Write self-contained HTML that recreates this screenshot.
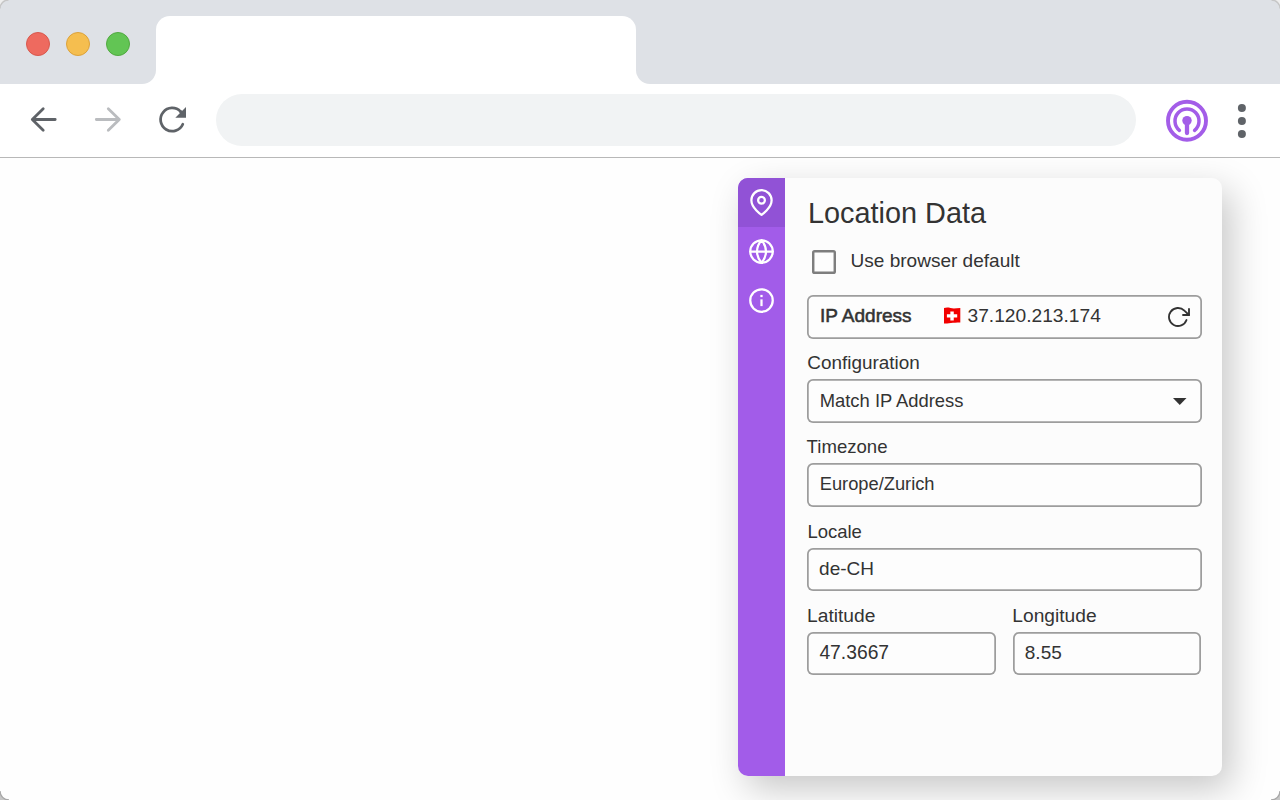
<!DOCTYPE html>
<html>
<head>
<meta charset="utf-8">
<style>
html,body{margin:0;padding:0;width:1280px;height:800px;overflow:hidden;background:#fefefe;font-family:"Liberation Sans",sans-serif;}
.abs{position:absolute;}
#strip{position:absolute;left:0;top:0;width:1280px;height:84px;background:#dee1e6;}
#tab{position:absolute;left:156px;top:16px;width:480px;height:68px;background:#fff;border-radius:14px 14px 0 0;}
.flare{position:absolute;top:70px;width:14px;height:14px;background:#fff;}
.flare i{position:absolute;left:0;top:0;width:14px;height:14px;background:#dee1e6;}
#toolbar{position:absolute;left:0;top:84px;width:1280px;height:73px;background:#fff;}
#line{position:absolute;left:0;top:157px;width:1280px;height:1px;background:#b8b8b8;}
#omni{position:absolute;left:216px;top:94px;width:920px;height:52px;border-radius:26px;background:#f1f3f4;}
.dot{position:absolute;width:24px;height:24px;border-radius:50%;box-sizing:border-box;border:1px solid;}
#panel{position:absolute;left:738px;top:178px;width:484px;height:598px;background:#fcfcfc;border-radius:10px;box-shadow:9px 13px 36px rgba(0,0,0,0.22);overflow:hidden;}
#side{position:absolute;left:0;top:0;width:47.4px;height:598px;background:#a25ce9;}
#active{position:absolute;left:0;top:0;width:47.4px;height:49px;background:#9152d6;}
.t{position:absolute;white-space:nowrap;color:#333;line-height:1;}
.box{position:absolute;box-sizing:border-box;border:none;box-shadow:inset 0 0 0 1.75px #9d9d9d;border-radius:6px;background:#fdfdfd;}
</style>
</head>
<body>
<div id="strip"></div>
<div id="tab"></div>
<div class="flare" style="left:142px"><i style="border-radius:0 0 14px 0"></i></div>
<div class="flare" style="left:636px"><i style="border-radius:0 0 0 14px"></i></div>
<div id="toolbar"></div>
<div id="line"></div>
<div id="omni"></div>

<div class="dot" style="left:26px;top:32px;background:#ee6a5f;border-color:#d8584d"></div>
<div class="dot" style="left:66px;top:32px;background:#f5be4f;border-color:#dca23b"></div>
<div class="dot" style="left:106px;top:32px;background:#62c554;border-color:#51a940"></div>

<!-- window corners -->
<svg class="abs" style="left:0;top:0" width="16" height="16" viewBox="0 0 16 16"><path d="M0 0H8A8 8 0 0 0 0 8Z" fill="#eeeeee"/><path d="M0 8.5A8.5 8.5 0 0 1 8.5 0" fill="none" stroke="#c6c6c6" stroke-width="1.4"/></svg>
<svg class="abs" style="left:1264px;top:0" width="16" height="16" viewBox="0 0 16 16"><path d="M16 0H8A8 8 0 0 1 16 8Z" fill="#eeeeee"/><path d="M16 8.5A8.5 8.5 0 0 0 7.5 0" fill="none" stroke="#c6c6c6" stroke-width="1.4"/></svg>

<svg class="abs" style="left:0;top:784px" width="16" height="16" viewBox="0 0 16 16"><path d="M0 16V7A9 9 0 0 0 9 16Z" fill="#c6c6c6"/><path d="M0 7A9 9 0 0 0 9 16" fill="none" stroke="#a8a8a8" stroke-width="1.3"/></svg>
<svg class="abs" style="left:1264px;top:784px" width="16" height="16" viewBox="0 0 16 16"><path d="M16 16V7A9 9 0 0 1 7 16Z" fill="#c6c6c6"/><path d="M16 7A9 9 0 0 1 7 16" fill="none" stroke="#a8a8a8" stroke-width="1.3"/></svg>
<!-- toolbar icons -->
<svg class="abs" style="left:0;top:84px" width="220" height="73" viewBox="0 84 220 73">
  <g fill="none" stroke="#5f6368" stroke-width="2.8" stroke-linecap="round" stroke-linejoin="round">
    <path d="M55.2 119.5H32.4M43.2 108.7L32.3 119.5L43.2 130.3"/>
  </g>
  <g fill="none" stroke="#babcbf" stroke-width="2.8" stroke-linecap="round" stroke-linejoin="round">
    <path d="M96.3 119.5H119.2M108.3 108.7L119.3 119.5L108.3 130.3"/>
  </g>
  <path d="M182.8 124.2A11.6 11.6 0 1 1 180.6 111.6" fill="none" stroke="#5f6368" stroke-width="2.75" stroke-linecap="round"/><path d="M181.3 112.3L180 111" stroke="#5f6368" stroke-width="2.75"/>
  <path d="M175.3 117.8L186 107V117.8Z" fill="#5f6368"/>
</svg>
<svg class="abs" style="left:1160px;top:94px" width="100" height="54" viewBox="1160 94 100 54">
  <circle cx="1187" cy="120.8" r="19" fill="none" stroke="#a35de8" stroke-width="3.9"/>
  <path d="M1179.4 130.3A12 12 0 1 1 1194.6 130.3" fill="none" stroke="#a35de8" stroke-width="3.5" stroke-linecap="round"/>
  <circle cx="1187" cy="120.6" r="4.7" fill="#a35de8"/>
  <path d="M1187 121V133.1" stroke="#a35de8" stroke-width="4.3" stroke-linecap="round"/>
  <circle cx="1241.9" cy="107.9" r="4" fill="#5f6368"/>
  <circle cx="1241.9" cy="120.9" r="4" fill="#5f6368"/>
  <circle cx="1241.9" cy="134" r="4" fill="#5f6368"/>
</svg>

<div id="panel">
  <div id="side">
    <div id="active"></div>
    <svg class="abs" style="left:10px;top:11px" width="27" height="27" viewBox="0 0 24 24" fill="none" stroke="#fff" stroke-width="2" stroke-linecap="round" stroke-linejoin="round"><path d="M21 10c0 7-9 13-9 13s-9-6-9-13a9 9 0 0 1 18 0z"/><circle cx="12" cy="10" r="3"/></svg>
    <svg class="abs" style="left:9.75px;top:59.75px" width="27" height="27" viewBox="0 0 24 24" fill="none" stroke="#fff" stroke-width="2" stroke-linecap="round" stroke-linejoin="round"><circle cx="12" cy="12" r="10"/><line x1="2" y1="12" x2="22" y2="12"/><path d="M12 2a15.3 15.3 0 0 1 4 10 15.3 15.3 0 0 1-4 10 15.3 15.3 0 0 1-4-10 15.3 15.3 0 0 1 4-10z"/></svg>
    <svg class="abs" style="left:9.75px;top:108.75px" width="27" height="27" viewBox="0 0 24 24" fill="none" stroke="#fff" stroke-width="2" stroke-linejoin="round"><circle cx="12" cy="12" r="10"/><line x1="12" y1="17" x2="12" y2="11"/><line x1="12" y1="7" x2="12" y2="9"/></svg>
  </div>
</div>

<!-- panel content, absolute page coords -->
<div class="t" style="left:808px;top:199.3px;font-size:28.85px">Location Data</div>

<div class="abs" style="left:811.7px;top:250.4px;width:24.3px;height:24.1px;box-shadow:inset 0 0 0 2.45px #7e7e7e;border-radius:2.6px;background:#fdfdfd"></div>
<div class="t" style="left:850.5px;top:250.9px;font-size:19.05px">Use browser default</div>

<div class="box" style="left:807.1px;top:294.7px;width:394.7px;height:43.9px"></div>
<div class="t" style="left:820px;top:306px;font-size:19px;-webkit-text-stroke:0.55px #333">IP Address</div>
<svg class="abs" style="left:943px;top:307px" width="19" height="18" viewBox="0 0 19 18">
  <path d="M1 1.1C3 0.5 5 0.4 7.5 1.1C10 1.8 13 1.4 17.3 1.1V15.4C13.5 15.6 10.5 15.5 8 15.9C5 16.4 3 16.2 1 16.6Z" fill="#f20000"/>
  <path d="M7.35 4.6H10.75V7.2H14.2V10.6H10.75V13.6H7.35V10.6H3.9V7.2H7.35Z" fill="#fff"/>
</svg>
<div class="t" style="left:967.5px;top:305.7px;font-size:19.2px">37.120.213.174</div>
<svg class="abs" style="left:1165.75px;top:304.75px" width="24" height="24" viewBox="0 0 24 24" fill="none" stroke="#333" stroke-width="1.85" stroke-linecap="round" stroke-linejoin="round"><polyline points="23 4 23 10 17 10"/><path d="M20.49 15a9 9 0 1 1-2.12-9.36L23 10"/></svg>

<div class="t" style="left:807.3px;top:353.8px;font-size:18.9px">Configuration</div>
<div class="box" style="left:807.1px;top:379.2px;width:394.7px;height:43.9px"></div>
<div class="t" style="left:819.7px;top:391.6px;font-size:18.4px">Match IP Address</div>
<svg class="abs" style="left:1172px;top:397px" width="16" height="9" viewBox="0 0 16 9"><path d="M1 1H14.5L7.75 8Z" fill="#333"/></svg>

<div class="t" style="left:806.6px;top:438px;font-size:18.6px">Timezone</div>
<div class="box" style="left:807.1px;top:463.3px;width:394.7px;height:43.9px"></div>
<div class="t" style="left:819.7px;top:475.2px;font-size:18.3px">Europe/Zurich</div>

<div class="t" style="left:807.4px;top:522.6px;font-size:18.5px">Locale</div>
<div class="box" style="left:807.1px;top:547.5px;width:394.7px;height:43.9px"></div>
<div class="t" style="left:819.1px;top:559.4px;font-size:19px">de-CH</div>

<div class="t" style="left:807.1px;top:606.1px;font-size:19.2px">Latitude</div>
<div class="t" style="left:1012.3px;top:606.1px;font-size:19.2px">Longitude</div>
<div class="box" style="left:807.1px;top:631.6px;width:188.8px;height:43.9px"></div>
<div class="box" style="left:1012.9px;top:631.6px;width:188.5px;height:43.9px"></div>
<div class="t" style="left:819.4px;top:643.2px;font-size:19.3px">47.3667</div>
<div class="t" style="left:1024.8px;top:643.4px;font-size:19px">8.55</div>
</body>
</html>
